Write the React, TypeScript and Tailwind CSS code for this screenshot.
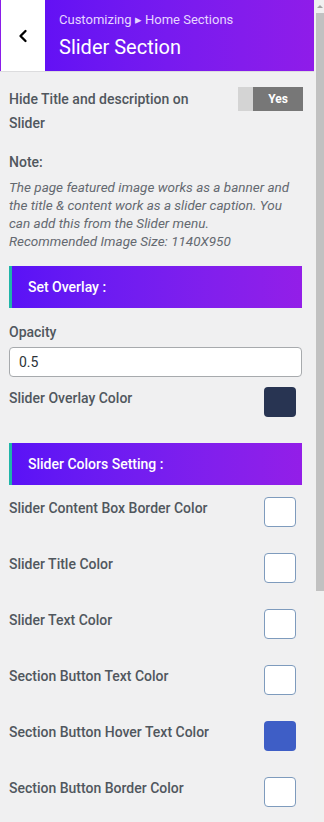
import { ChevronLeft } from 'lucide-react'

const colorRows: { label: string; color?: string }[] = [
  { label: 'Slider Content Box Border Color' },
  { label: 'Slider Title Color' },
  { label: 'Slider Text Color' },
  { label: 'Section Button Text Color' },
  { label: 'Section Button Hover Text Color', color: '#3e5ec6' },
  { label: 'Section Button Border Color' },
]

function Swatch({ color }: { color?: string }) {
  return (
    <div
      className={`w-[32px] h-[30px] rounded-[4px] border shrink-0 ${color ? 'border-transparent' : 'border-[#7e9bbd] bg-white'}`}
      style={color ? { backgroundColor: color } : undefined}
    />
  )
}

function SectionHeading({ title }: { title: string }) {
  return (
    <div className="h-[42px] flex items-center pl-[16px] border-l-[3px] border-[#1fb5a9] bg-gradient-to-r from-[#5a12f6] to-[#931ee8] text-white text-[14px] font-medium">
      {title}
    </div>
  )
}

export default function App() {
  return (
    <div className="h-[822px] w-[324px] overflow-hidden flex bg-[#f0f0f1]" style={{ fontFamily: 'Roboto, "Noto Sans", sans-serif' }}>
      <div className="w-[314px] shrink-0 flex flex-col">
        <div className="flex h-[72px] shrink-0 border-b border-[#dcdcde]">
          <div className="w-[45px] bg-white border-l-[1.5px] border-[#8a1de9] flex items-center justify-center">
            <ChevronLeft className="w-[20px] h-[20px] text-black" strokeWidth={2.8} />
          </div>
          <div className="flex-1 bg-gradient-to-r from-[#6311f4] to-[#8f1ce9] pl-[14px] pt-[11px]">
            <div className="text-[13px] leading-[18px] text-[#e6d6ff]">Customizing ▸ Home Sections</div>
            <div className="text-[20px] leading-[28px] text-white mt-[4px]">Slider Section</div>
          </div>
        </div>

        <div className="px-[9px] pr-[12px]">
          <div className="flex items-start justify-between pt-[15px]">
            <div className="text-[14px] leading-[24px] font-medium text-[#50575e] w-[200px]">
              Hide Title and description on Slider
            </div>
            <div className="flex h-[24px] w-[65px] shrink-0 mr-[-1px]">
              <div className="w-[15px] bg-[#d4d4d4]" />
              <div className="flex-1 bg-[#777777] text-white text-[12px] font-bold flex items-center justify-center">Yes</div>
            </div>
          </div>

          <div className="mt-[17px] text-[14px] font-medium text-[#50575e] leading-[20px]">Note:</div>
          <p className="mt-[6px] text-[13.5px] leading-[18px] italic text-[#646970] pr-[4px]">
            The page featured image works as a banner and the title &amp; content work as a slider caption. You can add this from the Slider menu.
            <br />
            Recommended Image Size: 1140X950
          </p>

          <div className="mt-[16px]">
            <SectionHeading title="Set Overlay :" />
          </div>

          <div className="mt-[14px] text-[14px] font-medium text-[#50575e] leading-[20px]">Opacity</div>
          <div className="mt-[5px] h-[30px] bg-white border border-[#a7aaad] rounded-[4px] flex items-center pl-[9px] text-[14px] text-[#2c3338]">
            0.5
          </div>

          <div className="mt-[10px] flex items-start justify-between pr-[6px]">
            <div className="text-[14px] font-medium text-[#50575e] leading-[20px] pt-[1px]">Slider Overlay Color</div>
            <Swatch color="#283452" />
          </div>

          <div className="mt-[26px]">
            <SectionHeading title="Slider Colors Setting :" />
          </div>

          <div className="flex flex-col gap-[26px] mt-[12px] pr-[6px]">
            {colorRows.map((row) => (
              <div key={row.label} className="flex items-start justify-between">
                <div className="text-[14px] font-medium text-[#50575e] leading-[20px] pt-[1px]">{row.label}</div>
                <Swatch color={row.color} />
              </div>
            ))}
          </div>
        </div>
      </div>

      <div className="w-[10px] shrink-0 flex flex-col items-end bg-[#f0f0f0]">
        <div className="h-[13px] w-[8px] flex items-center justify-center">
          <div className="w-0 h-0 border-l-[3px] border-r-[3px] border-b-[3px] border-l-transparent border-r-transparent border-b-[#a3a3a3]" />
        </div>
        <div className="w-[8px] h-[578px] bg-[#c1c1c1]" />
      </div>
    </div>
  )
}
